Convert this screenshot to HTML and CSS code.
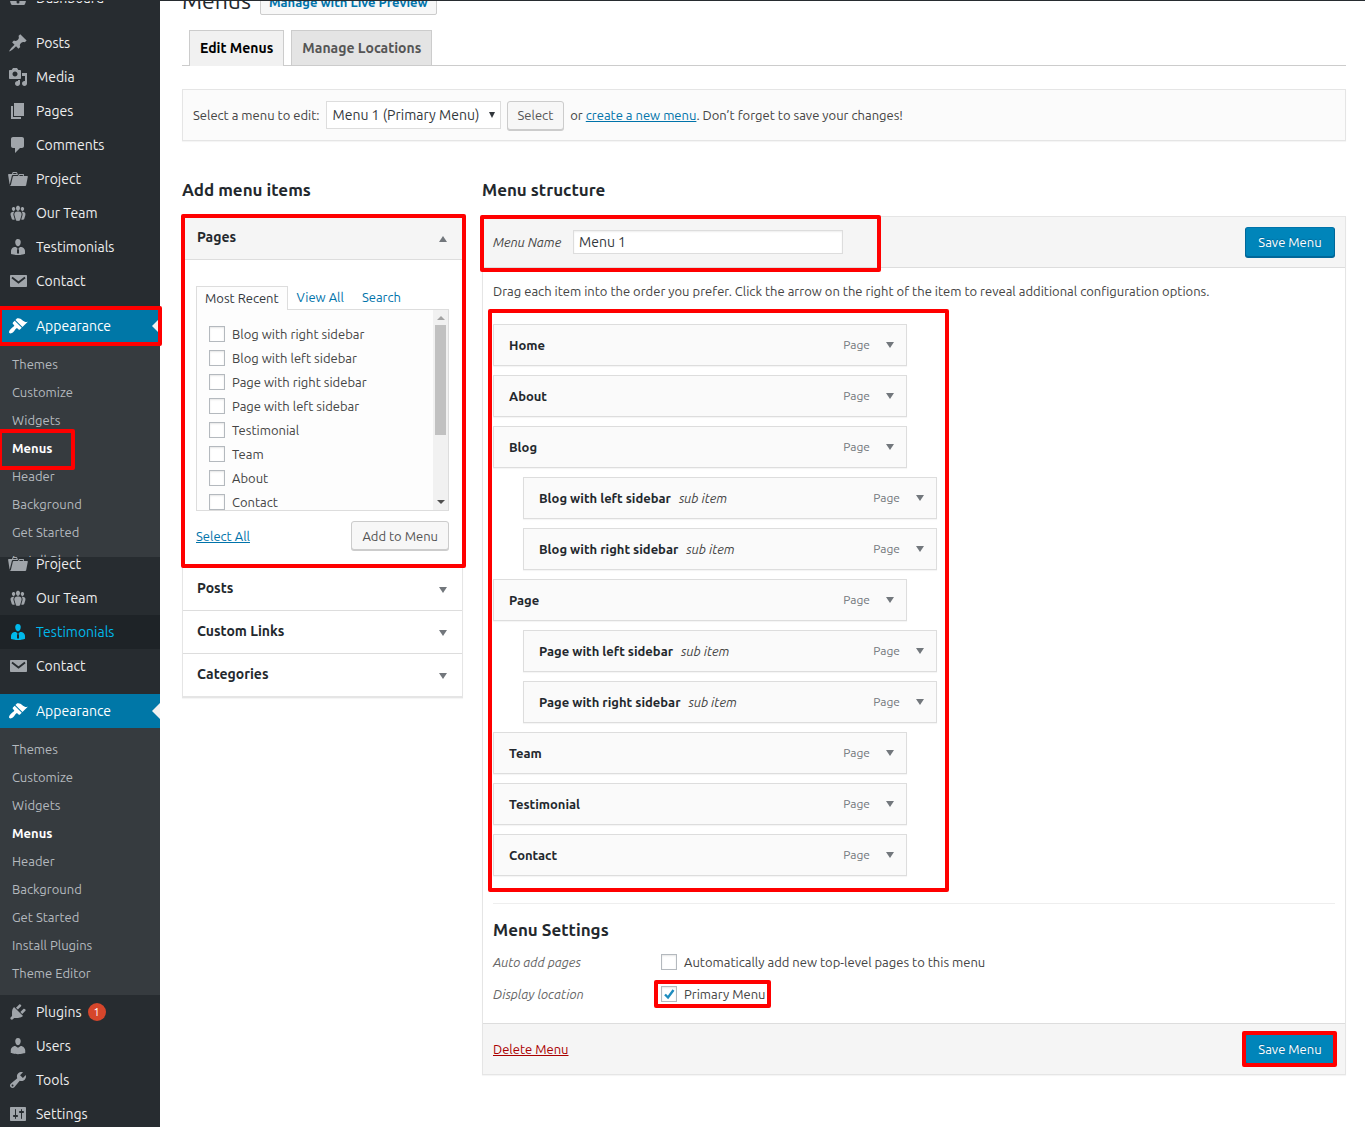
FILE: index.html
```html
<!DOCTYPE html>
<html lang="en">
<head>
<meta charset="utf-8">
<title>Menus</title>
<link rel="stylesheet" href="styles.css">
</head>
<body>
<svg class="sprite" aria-hidden="true">
  <symbol id="i-dash" viewBox="0 0 20 20"><path d="M3.76 17h12.48c1.04-1.3 1.76-3.1 1.76-5a8 8 0 1 0-16 0c0 1.900.72 3.700 1.760 5zM10 12.500a1.500 1.500 0 1 1 0 3 1.500 1.500 0 0 1 0-3z"/></symbol>
  <symbol id="i-post" viewBox="0 0 20 20"><path d="M10.44 3.02l1.82-1.82 6.36 6.35-1.83 1.82c-1.05-.68-2.48-.57-3.41.36l-.75.75c-.92.93-1.04 2.35-.35 3.41l-1.83 1.82-2.41-2.41-2.8 2.79c-.42.42-3.38 2.71-3.8 2.29s1.86-3.39 2.28-3.81l2.79-2.79L4.1 9.360l1.830-1.820c1.050.69 2.480.57 3.400-.36l.75-.75c.93-.92 1.050-2.350.36-3.410z"/></symbol>
  <symbol id="i-media" viewBox="0 0 20 20"><path d="M13 11V4c0-.55-.45-1-1-1h-1.67L9 1H5L3.67 3H2c-.55 0-1 .45-1 1v7c0 .55.45 1 1 1h10c.55 0 1-.45 1-1zM7 4.500c1.380 0 2.500 1.120 2.500 2.500S8.380 9.500 7 9.500 4.500 8.380 4.500 7 5.620 4.500 7 4.500zM14 6h5v10.500c0 1.380-1.120 2.500-2.500 2.500S14 17.880 14 16.500s1.120-2.500 2.500-2.500c.17 0 .34.02.5.05V9h-3V6zm-4 8.050V13h2v3.500c0 1.380-1.120 2.500-2.500 2.500S7 17.880 7 16.500 8.120 14 9.500 14c.17 0 .34.02.5.05z"/></symbol>
  <symbol id="i-page" viewBox="0 0 20 20"><path d="M6 15V2h10v13H6zm-1 1h8v2H3V5h2v11z"/></symbol>
  <symbol id="i-comment" viewBox="0 0 20 20"><path d="M5 2h9c1.100 0 2 .9 2 2v7c0 1.100-.9 2-2 2h-2l-5 5v-5H5c-1.100 0-2-.9-2-2V4c0-1.100.9-2 2-2z"/></symbol>
  <symbol id="i-folder" viewBox="0 0 20 20"><path d="M4 5H.78c-.37 0-.74.32-.69.84l1.56 9.99S3.500 8.470 3.860 6.700c.11-.53.61-.7.98-.7H10s-.7-2.080-.77-2.310C9.110 3.250 8.890 3 8.450 3H5.140c-.36 0-.7.23-.8.64C4.250 4.040 4 5 4 5zm4.880 0h-4s.42-1 .87-1h2.130c.48 0 1 1 1 1zM2.670 16.250c-.31.47-.76.75-1.260.75h15.730c.54 0 .92-.31 1.030-.83.44-2.190 1.680-8.440 1.680-8.440.07-.5-.3-.73-.62-.73H16V5.530c0-.16-.26-.53-.66-.53h-3.760c-.52 0-.87.58-.87.58L10 7H5.590c-.32 0-.63.19-.69.5 0 0-1.590 6.700-1.720 7.330-.07.37-.22.99-.51 1.420zM15.380 7H11s.58-1 1.130-1h2.290c.71 0 .96 1 .96 1z"/></symbol>
  <symbol id="i-team" viewBox="0 0 20 20"><path d="M8.030 4.460c-.29 1.280.55 3.460 1.970 3.460 1.410 0 2.250-2.180 1.960-3.460-.22-.98-1.080-1.630-1.960-1.630-.89 0-1.740.65-1.970 1.630zm-4.130.9c-.25 1.080.47 2.930 1.670 2.930s1.920-1.850 1.670-2.930c-.19-.83-.92-1.390-1.670-1.390s-1.480.56-1.670 1.390zm8.860 0c-.25 1.080.47 2.930 1.660 2.930 1.200 0 1.920-1.850 1.670-2.930-.19-.83-.92-1.390-1.670-1.390-.74 0-1.470.56-1.660 1.390zm-.59 11.430l1.250-4.300C14.200 10 12.710 8.470 10 8.470c-2.720 0-4.210 1.530-3.440 4.020l1.260 4.300C8.050 17.510 9 18 10 18c.98 0 1.940-.49 2.170-1.210zm-6.100-7.630c-.49.67-.96 1.830-.42 3.590l1.120 3.790c-.34.2-.77.31-1.200.31-.85 0-1.650-.41-1.850-1.030l-1.070-3.650c-.65-2.110.61-3.400 2.920-3.400.27 0 .54.02.79.06-.1.1-.2.22-.29.33zm8.350-.39c2.310 0 3.580 1.290 2.920 3.400l-1.070 3.650c-.2.62-1 1.030-1.850 1.030-.43 0-.86-.11-1.200-.31l1.110-3.770c.55-1.780.08-2.940-.42-3.610-.08-.11-.18-.23-.28-.33.25-.04.51-.06.79-.06z"/></symbol>
  <symbol id="i-man" viewBox="0 0 20 20"><path d="M7.300 6l-.03-.19c-.04-.37-.05-.73-.03-1.080.02-.36.1-.71.25-1.040.14-.32.31-.61.52-.86s.49-.46.83-.6c.34-.15.72-.23 1.130-.23.69 0 1.260.2 1.710.59s.76.87.91 1.440.18 1.160.09 1.780l-.03.19c-.01.09-.05.25-.11.48-.05.24-.12.47-.2.69-.08.21-.19.45-.34.72-.14.27-.3.49-.47.69-.18.19-.4.34-.67.48-.27.13-.55.19-.86.19s-.59-.06-.87-.19c-.26-.13-.49-.29-.67-.5-.18-.2-.34-.42-.49-.66-.15-.25-.26-.49-.34-.73-.09-.25-.16-.47-.21-.67-.06-.21-.1-.37-.12-.5zm9.200 6.240c.41.7.5 1.410.5 2.140v2.490c0 .03-.12.08-.29.13-.18.04-.42.13-.97.27-.55.12-1.100.24-1.650.34s-1.190.19-1.950.27c-.75.08-1.460.12-2.130.12-.68 0-1.390-.04-2.140-.12-.75-.07-1.400-.17-1.980-.27-.58-.11-1.080-.23-1.560-.34-.49-.11-.8-.21-1.060-.29L3 16.870v-2.490c0-.75.07-1.460.46-2.150s.81-1.250 1.500-1.680C5.660 10.120 7.190 10 8 10l1.670 1.670L9 13v3l1.020 1.080L11 16v-3l-.68-1.330L11.970 10c.77 0 2.200.07 2.900.52.71.45 1.210 1.020 1.630 1.720z"/></symbol>
  <symbol id="i-mail" viewBox="0 0 20 20"><path d="M3 4h15c.55 0 1 .45 1 1v10c0 .55-.45 1-1 1H3c-.55 0-1-.45-1-1V5c0-.55.45-1 1-1z"/><path d="M4 6.500l6.500 5L17 6.500" fill="none" stroke="#272c30" stroke-width="1.800"/></symbol>
  <symbol id="i-brush" viewBox="0 0 20 20"><path d="M14.480 11.060L7.410 3.990l1.500-1.500c.5-.56 2.300-.47 3.510.32 1.210.8 1.430 1.280 2.910 2.100 1.180.64 2.450 1.260 4.450.85zm-.71.71L6.700 4.700 4.930 6.470c-.39.39-.39 1.020 0 1.410l1.060 1.060c.39.39.39 1.030 0 1.420-.6.6-1.430 1.110-2.210 1.690-.35.26-.7.53-1.010.84C1.430 14.230.4 16.080 1.400 17.070c.99 1 2.840-.03 4.180-1.360.31-.31.58-.66.85-1.020.57-.78 1.080-1.610 1.690-2.210.39-.39 1.020-.39 1.410 0l1.060 1.060c.39.39 1.020.39 1.410 0z"/></symbol>
  <symbol id="i-plug" viewBox="0 0 20 20"><path d="M13.110 4.360L9.870 7.600 8 5.730l3.240-3.240c.35-.34 1.050-.2 1.560.32.52.51.66 1.210.31 1.550zm-8 1.770l.91-1.120 9.010 9.010-1.190.84c-.71.71-2.630 1.160-3.820 1.160H6.140L4.900 17.260c-.59.59-1.540.59-2.120 0-.59-.58-.59-1.530 0-2.120l1.240-1.240v-3.880c0-1.130.4-3.190 1.090-3.890zm7.260 3.970l3.240-3.240c.34-.35 1.040-.21 1.550.31.52.51.66 1.210.31 1.550l-3.240 3.250z"/></symbol>
  <symbol id="i-user" viewBox="0 0 20 20"><path d="M10 9.250c-2.270 0-2.730-3.440-2.730-3.440C7 4.020 7.820 2 9.970 2c2.160 0 2.980 2.020 2.710 3.810 0 0-.41 3.440-2.680 3.440zm0 2.570L12.720 10c2.390 0 4.520 2.330 4.520 4.530v2.490s-3.650 1.130-7.240 1.130c-3.650 0-7.240-1.130-7.240-1.130v-2.490c0-2.250 1.940-4.480 4.470-4.480z"/></symbol>
  <symbol id="i-tool" viewBox="0 0 20 20"><path d="M16.680 9.770c-1.340 1.340-3.300 1.670-4.950.99l-5.410 6.520c-.99.99-2.590.99-3.580 0s-.99-2.590 0-3.570l6.520-5.420c-.68-1.650-.35-3.610.99-4.950 1.280-1.280 3.120-1.620 4.720-1.060l-2.890 2.890 2.820 2.820 2.860-2.870c.53 1.580.18 3.390-1.080 4.650zM3.810 16.210c.4.39 1.040.39 1.430 0 .4-.4.4-1.040 0-1.430-.39-.4-1.030-.4-1.430 0-.39.39-.39 1.030 0 1.430z"/></symbol>
  <symbol id="i-set" viewBox="0 0 20 20"><path d="M18 16V4c0-.55-.45-1-1-1H3c-.55 0-1 .45-1 1v12c0 .55.45 1 1 1h14c.55 0 1-.45 1-1zM8 11h1c.55 0 1 .45 1 1s-.45 1-1 1H8v1.500c0 .28-.22.5-.5.5s-.5-.22-.5-.5V13H6c-.55 0-1-.45-1-1s.45-1 1-1h1V5.500c0-.28.22-.5.5-.5s.5.22.5.5V11zm5-2h-1c-.55 0-1-.45-1-1s.45-1 1-1h1V5.500c0-.28.22-.5.5-.5s.5.22.5.5V7h1c.55 0 1 .45 1 1s-.45 1-1 1h-1v5.500c0 .28-.22.5-.5.5s-.5-.22-.5-.5V9z"/></symbol>
</svg>
<div class="adminbar"></div>
<div class="layout">
  <nav class="side" aria-label="Main menu">
    <div class="side-part">
      <a class="item item-cut" href="#"><svg><use href="#i-dash"/></svg>Dashboard</a>
      <a class="item" href="#"><svg><use href="#i-post"/></svg>Posts</a>
      <a class="item" href="#"><svg><use href="#i-media"/></svg>Media</a>
      <a class="item" href="#"><svg><use href="#i-page"/></svg>Pages</a>
      <a class="item" href="#"><svg><use href="#i-comment"/></svg>Comments</a>
      <a class="item" href="#"><svg><use href="#i-folder"/></svg>Project</a>
      <a class="item" href="#"><svg><use href="#i-team"/></svg>Our Team</a>
      <a class="item" href="#"><svg><use href="#i-man"/></svg>Testimonials</a>
      <a class="item" href="#"><svg><use href="#i-mail"/></svg>Contact</a>
      <a class="item current mark mark-appearance" href="#"><svg><use href="#i-brush"/></svg>Appearance</a>
      <div class="sub sub-cut">
        <a href="#">Themes</a>
        <a href="#">Customize</a>
        <a href="#">Widgets</a>
        <a class="on mark mark-menus" href="#">Menus</a>
        <a href="#">Header</a>
        <a href="#">Background</a>
        <a href="#">Get Started</a>
        <a href="#">Install Plugins</a>
      </div>
    </div>
    <div class="side-part side-rest">
      <a class="item item-overlap" href="#"><svg><use href="#i-folder"/></svg>Project</a>
      <a class="item" href="#"><svg><use href="#i-team"/></svg>Our Team</a>
      <a class="item hover" href="#"><svg><use href="#i-man"/></svg>Testimonials</a>
      <a class="item" href="#"><svg><use href="#i-mail"/></svg>Contact</a>
      <a class="item current" href="#"><svg><use href="#i-brush"/></svg>Appearance</a>
      <div class="sub">
        <a href="#">Themes</a>
        <a href="#">Customize</a>
        <a href="#">Widgets</a>
        <a class="on" href="#">Menus</a>
        <a href="#">Header</a>
        <a href="#">Background</a>
        <a href="#">Get Started</a>
        <a href="#">Install Plugins</a>
        <a href="#">Theme Editor</a>
      </div>
      <a class="item" href="#"><svg><use href="#i-plug"/></svg>Plugins <span class="badge">1</span></a>
      <a class="item" href="#"><svg><use href="#i-user"/></svg>Users</a>
      <a class="item" href="#"><svg><use href="#i-tool"/></svg>Tools</a>
      <a class="item item-last" href="#"><svg><use href="#i-set"/></svg>Settings</a>
    </div>
  </nav>

  <main class="main">
    <header class="title">
      <h1>Menus</h1>
      <a class="preview" href="#">Manage with Live Preview</a>
    </header>
    <div class="tabs">
      <a class="tab tab-on" href="#">Edit Menus</a>
      <a class="tab" href="#">Manage Locations</a>
    </div>

    <form class="manage">
      <label for="menu">Select a menu to edit:</label>
      <span class="select"><select id="menu"><option>Menu 1 (Primary Menu)</option></select></span>
      <button class="btn" type="button">Select</button>
      <span>or <a href="#">create a new menu</a>. Don’t forget to save your changes!</span>
    </form>

    <div class="columns">
      <section class="add">
        <h2>Add menu items</h2>
        <div class="accordion">
          <div class="mark mark-pages">
            <h3 class="acc-head acc-open">Pages<i class="up"></i></h3>
            <div class="acc-body">
              <div class="ptabs">
                <a class="ptab ptab-on" href="#">Most Recent</a>
                <a class="ptab" href="#">View All</a>
                <a class="ptab" href="#">Search</a>
              </div>
              <div class="picker">
                <div class="checks">
                  <label><input type="checkbox">Blog with right sidebar</label>
                  <label><input type="checkbox">Blog with left sidebar</label>
                  <label><input type="checkbox">Page with right sidebar</label>
                  <label><input type="checkbox">Page with left sidebar</label>
                  <label><input type="checkbox">Testimonial</label>
                  <label><input type="checkbox">Team</label>
                  <label><input type="checkbox">About</label>
                  <label><input type="checkbox">Contact</label>
                </div>
                <div class="scroll"><i class="up"></i><span class="thumb"></span><i class="down"></i></div>
              </div>
              <div class="acc-actions">
                <a href="#">Select All</a>
                <button class="btn" type="button">Add to Menu</button>
              </div>
            </div>
          </div>
          <h3 class="acc-head">Posts<i class="down"></i></h3>
          <h3 class="acc-head">Custom Links<i class="down"></i></h3>
          <h3 class="acc-head">Categories<i class="down"></i></h3>
        </div>
      </section>

      <section class="structure">
        <h2>Menu structure</h2>
        <form class="panel">
          <div class="panel-head">
            <div class="name mark mark-name">
              <label for="name">Menu Name</label>
              <input id="name" type="text" value="Menu 1">
            </div>
            <button class="btn btn-primary" type="button">Save Menu</button>
          </div>
          <div class="panel-body">
            <p>Drag each item into the order you prefer. Click the arrow on the right of the item to reveal additional configuration options.</p>
            <ul class="menu mark mark-list">
              <li><b>Home</b><span>Page</span><i class="down"></i></li>
              <li><b>About</b><span>Page</span><i class="down"></i></li>
              <li><b>Blog</b><span>Page</span><i class="down"></i></li>
              <li class="child"><b>Blog with left sidebar</b><em>sub item</em><span>Page</span><i class="down"></i></li>
              <li class="child"><b>Blog with right sidebar</b><em>sub item</em><span>Page</span><i class="down"></i></li>
              <li><b>Page</b><span>Page</span><i class="down"></i></li>
              <li class="child"><b>Page with left sidebar</b><em>sub item</em><span>Page</span><i class="down"></i></li>
              <li class="child"><b>Page with right sidebar</b><em>sub item</em><span>Page</span><i class="down"></i></li>
              <li><b>Team</b><span>Page</span><i class="down"></i></li>
              <li><b>Testimonial</b><span>Page</span><i class="down"></i></li>
              <li><b>Contact</b><span>Page</span><i class="down"></i></li>
            </ul>
            <div class="settings">
              <h2>Menu Settings</h2>
              <div class="setting">
                <em>Auto add pages</em>
                <label><input type="checkbox">Automatically add new top-level pages to this menu</label>
              </div>
              <div class="setting">
                <em>Display location</em>
                <label class="mark mark-primary"><input type="checkbox" checked>Primary Menu</label>
              </div>
            </div>
          </div>
          <div class="panel-foot">
            <a class="delete" href="#">Delete Menu</a>
            <span class="mark mark-save"><button class="btn btn-primary" type="button">Save Menu</button></span>
          </div>
        </form>
      </section>
    </div>
  </main>
</div>
</body>
</html>
```

FILE: styles.css
```css
* { box-sizing: border-box; }

body {
  margin: 0;
  background: #fff;
  color: #444;
  font: 13px/20px Ubuntu, "Noto Sans", sans-serif;
}

a { color: #0073aa; }
h1, h2, h3, p, ul { margin: 0; padding: 0; }
h1, h2, h3 { color: #23282d; }
button, input, select { font: inherit; color: inherit; }

.sprite { display: none; }
.adminbar { height: 1px; background: #272c30; }

.layout {
  display: grid;
  grid-template-columns: 160px minmax(0, 1fr);
  overflow: clip;
}

/* Red frames drawn over the areas to point out */
.mark { position: relative; }
.mark::after {
  content: "";
  position: absolute;
  z-index: 2;
  border: 4px solid #f00;
  border-radius: 2px;
  pointer-events: none;
}
.mark-appearance::after { inset: -3px -2px -3px -2px; }
.mark-menus::after { inset: -5px 85px -8px -2px; }
.mark-pages::after { inset: -3px -4px 0 -2px; }
.mark-name::after { inset: -15px -38px -18px -13px; }
.mark-list::after { inset: -15px -12px -16px -5px; }
.mark-primary::after { inset: -4px -5px -4px -7px; }
.mark-save::after { inset: -3px -2px -3px -3px; }

/* Small triangles */
.up, .down {
  flex: none;
  width: 0;
  height: 0;
  border: 0 solid transparent;
  border-width: 0 4px;
}
.up { border-bottom: 6px solid #72777c; }
.down { border-top: 6px solid #72777c; }

/* Side menu */
.side { display: flex; flex-direction: column; background: #272c30; }
.side-part { display: flex; flex-direction: column; background: #272c30; }
.side-rest { flex: 1; }
.item {
  display: flex;
  align-items: center;
  gap: 8px;
  flex: none;
  height: 34px;
  padding-left: 8px;
  color: #eee;
  font-size: 14px;
  text-decoration: none;
}
.item svg { width: 20px; height: 20px; fill: #a0a5aa; }
.item-cut { margin: -20px 0 11px; }
.item-overlap { margin-top: -10px; }
.item-last { height: 30px; align-items: start; padding-top: 7px; }
.hover { background: #1e2327; color: #00b9eb; }
.hover svg { fill: #00b9eb; }
.current {
  margin-top: 11px;
  background: #0077a7;
  color: #fff;
  position: relative;
}
.current svg { fill: #fff; }
.current::before {
  content: "";
  position: absolute;
  right: 0;
  top: 9px;
  border: 8px solid transparent;
  border-right-color: #f1f1f1;
  border-left: 0;
}
.sub {
  display: flex;
  flex-direction: column;
  padding: 7px 0 8px;
  background: #363b3f;
}
.sub-cut { height: 214px; padding-bottom: 0; }
.sub-cut a:last-child { height: 11px; overflow: hidden; }
.sub a {
  flex: none;
  height: 28px;
  padding-left: 12px;
  line-height: 28px;
  color: #b4b9be;
  text-decoration: none;
}
.sub .on { color: #fff; font-weight: 600; }
.badge {
  width: 18px;
  height: 18px;
  margin-left: -2px;
  border-radius: 9px;
  background: #d6462b;
  color: #fff;
  font-size: 11px;
  line-height: 18px;
  text-align: center;
}

/* Page head */
.main { padding: 0 19px 32px 22px; }
.title { display: flex; align-items: center; gap: 9px; height: 32px; margin-top: -16px; }
.title h1 { font-size: 23px; line-height: 32px; font-weight: 400; }
.preview {
  height: 28px;
  padding: 0 8px;
  border: 1px solid #ccc;
  border-radius: 2px;
  background: #f7f7f7;
  font-weight: 600;
  line-height: 28px;
  text-decoration: none;
}
.tabs {
  display: flex;
  gap: 7px;
  margin-top: 13px;
  padding-left: 7px;
  border-bottom: 1px solid #ccc;
}
.tab {
  height: 35px;
  padding: 0 10px;
  border: 1px solid #ccc;
  border-bottom: 0;
  background: #e4e4e4;
  color: #555;
  font-size: 14px;
  font-weight: 600;
  line-height: 34px;
  text-decoration: none;
}
.tab-on { height: 36px; margin-bottom: -1px; background: #f1f1f1; color: #000; }

/* Menu chooser */
.manage {
  display: flex;
  flex-wrap: wrap;
  align-items: center;
  gap: 6px;
  min-height: 52px;
  margin-top: 23px;
  padding: 0 10px;
  border: 1px solid #e5e5e5;
  background: #fbfbfb;
  box-shadow: 0 1px 1px rgba(0, 0, 0, .04);
}
.select { position: relative; }
.select::after {
  content: "";
  position: absolute;
  right: 6px;
  top: 11px;
  border: 3px solid transparent;
  border-top: 6px solid #32373c;
  border-bottom: 0;
  pointer-events: none;
}
.select select {
  display: block;
  width: 175px;
  height: 28px;
  padding: 0 18px 0 6px;
  appearance: none;
  border: 1px solid #ddd;
  border-radius: 0;
  background: #fff;
  color: #32373c;
  font-size: 14px;
}
.btn {
  height: 29px;
  padding: 0 10px;
  border: 1px solid #ccc;
  border-radius: 3px;
  background: #f7f7f7;
  box-shadow: 0 1px 0 #ccc;
  color: #555;
}
.btn-primary {
  width: 90px;
  height: 30px;
  padding: 0;
  border-color: #0073aa #006799 #006799;
  background: #0085ba;
  box-shadow: 0 1px 0 #006799;
  color: #fff;
  text-shadow: 0 -1px 1px #006799;
}

/* Columns */
.columns {
  display: grid;
  grid-template-columns: 281px minmax(0, 1fr);
  gap: 19px;
  margin-top: 37px;
}
h2 { font-size: 17px; line-height: 24px; font-weight: 600; }
.accordion {
  margin-top: 14px;
  border: 1px solid #e5e5e5;
  box-shadow: 0 1px 1px rgba(0, 0, 0, .04);
}
.acc-head {
  display: flex;
  justify-content: space-between;
  align-items: center;
  height: 43px;
  padding: 0 15px 2px 14px;
  border-bottom: 1px solid #ddd;
  font-size: 14px;
  font-weight: 600;
}
.acc-head i { margin-top: 3px; }
.acc-open { background: #f5f5f5; }
.acc-body { padding: 26px 13px 18px; }
.ptabs { display: flex; }
.ptab {
  height: 23px;
  padding: 0 9px;
  line-height: 22px;
  text-decoration: none;
}
.ptab-on {
  height: 24px;
  margin-bottom: -1px;
  padding: 0 8px;
  border: 1px solid #ddd;
  border-bottom: 0;
  background: #fdfdfd;
  color: #32373c;
}
.picker {
  display: flex;
  height: 202px;
  overflow: hidden;
  border: 1px solid #ddd;
  background: #fdfdfd;
}
.checks { flex: 1; padding: 12px; }
.checks label { height: 24px; }
label:has([type="checkbox"]) { display: flex; align-items: center; gap: 7px; }
[type="checkbox"] {
  appearance: none;
  flex: none;
  width: 16px;
  height: 16px;
  margin: 0;
  border: 1px solid #b4b9be;
  background: #fff;
  box-shadow: inset 0 1px 2px rgba(0, 0, 0, .1);
}
[type="checkbox"]:checked {
  background: #fff url("data:image/svg+xml,%3Csvg xmlns='http://www.w3.org/2000/svg' viewBox='0 0 14 14'%3E%3Cpath d='M3 7.500l3 3L11.500 3' fill='none' stroke='%231e8cbe' stroke-width='2.400'/%3E%3C/svg%3E") center / 14px no-repeat;
}
.scroll {
  display: flex;
  flex-direction: column;
  align-items: center;
  width: 15px;
  padding: 6px 0;
  background: #f1f1f1;
}
.scroll .up { border-bottom: 4px solid #a3a3a3; }
.scroll .down { margin-top: auto; border-top: 4px solid #505050; }
.thumb { width: 11px; height: 110px; margin-top: 5px; background: #c1c1c1; }
.acc-actions { display: flex; justify-content: space-between; align-items: center; margin-top: 10px; }
.accordion > .acc-head:last-child { border-bottom-color: #e5e5e5; }

/* Structure panel */
.panel {
  margin-top: 14px;
  border: 1px solid #e5e5e5;
  box-shadow: 0 1px 1px rgba(0, 0, 0, .04);
}
.panel-head, .panel-foot {
  display: flex;
  justify-content: space-between;
  align-items: center;
  min-height: 51px;
  padding: 0 10px;
  background: #f5f5f5;
}
.panel-head { border-bottom: 1px solid #ddd; }
.panel-foot { border-top: 1px solid #ddd; }
.name { display: flex; align-items: center; gap: 10px; }
.name label, em { font-style: italic; }
.name label { width: 70px; white-space: nowrap; }
.name input {
  width: 270px;
  height: 24px;
  padding: 0 5px;
  border: 1px solid #ddd;
  background: #fff;
  box-shadow: inset 0 1px 2px rgba(0, 0, 0, .07);
  color: #32373c;
  font-size: 14px;
}
.panel-body { padding: 13px 10px 13px; }
.menu {
  display: flex;
  flex-direction: column;
  gap: 9px;
  width: 444px;
  margin-top: 23px;
  list-style: none;
}
.menu li {
  display: flex;
  align-items: center;
  width: 414px;
  height: 42px;
  padding: 0 12px 0 15px;
  border: 1px solid #ddd;
  background: #fafafa;
  box-shadow: 0 1px 1px rgba(0, 0, 0, .04);
}
.menu .child { margin-left: 30px; }
.menu b { color: #23282d; font-weight: 600; }
.menu em { margin-left: 8px; }
.menu span { margin: 0 16px 0 auto; color: #72777c; font-size: 12px; }
.settings { margin-top: 27px; padding-top: 14px; border-top: 1px solid #eee; }
.setting { display: flex; align-items: center; height: 32px; }
.setting em { width: 168px; color: #666; }
.settings h2 + .setting { margin-top: 4px; }
.delete { color: #a00; }
.mark-save { display: block; }
.mark-save button { display: block; }
```
